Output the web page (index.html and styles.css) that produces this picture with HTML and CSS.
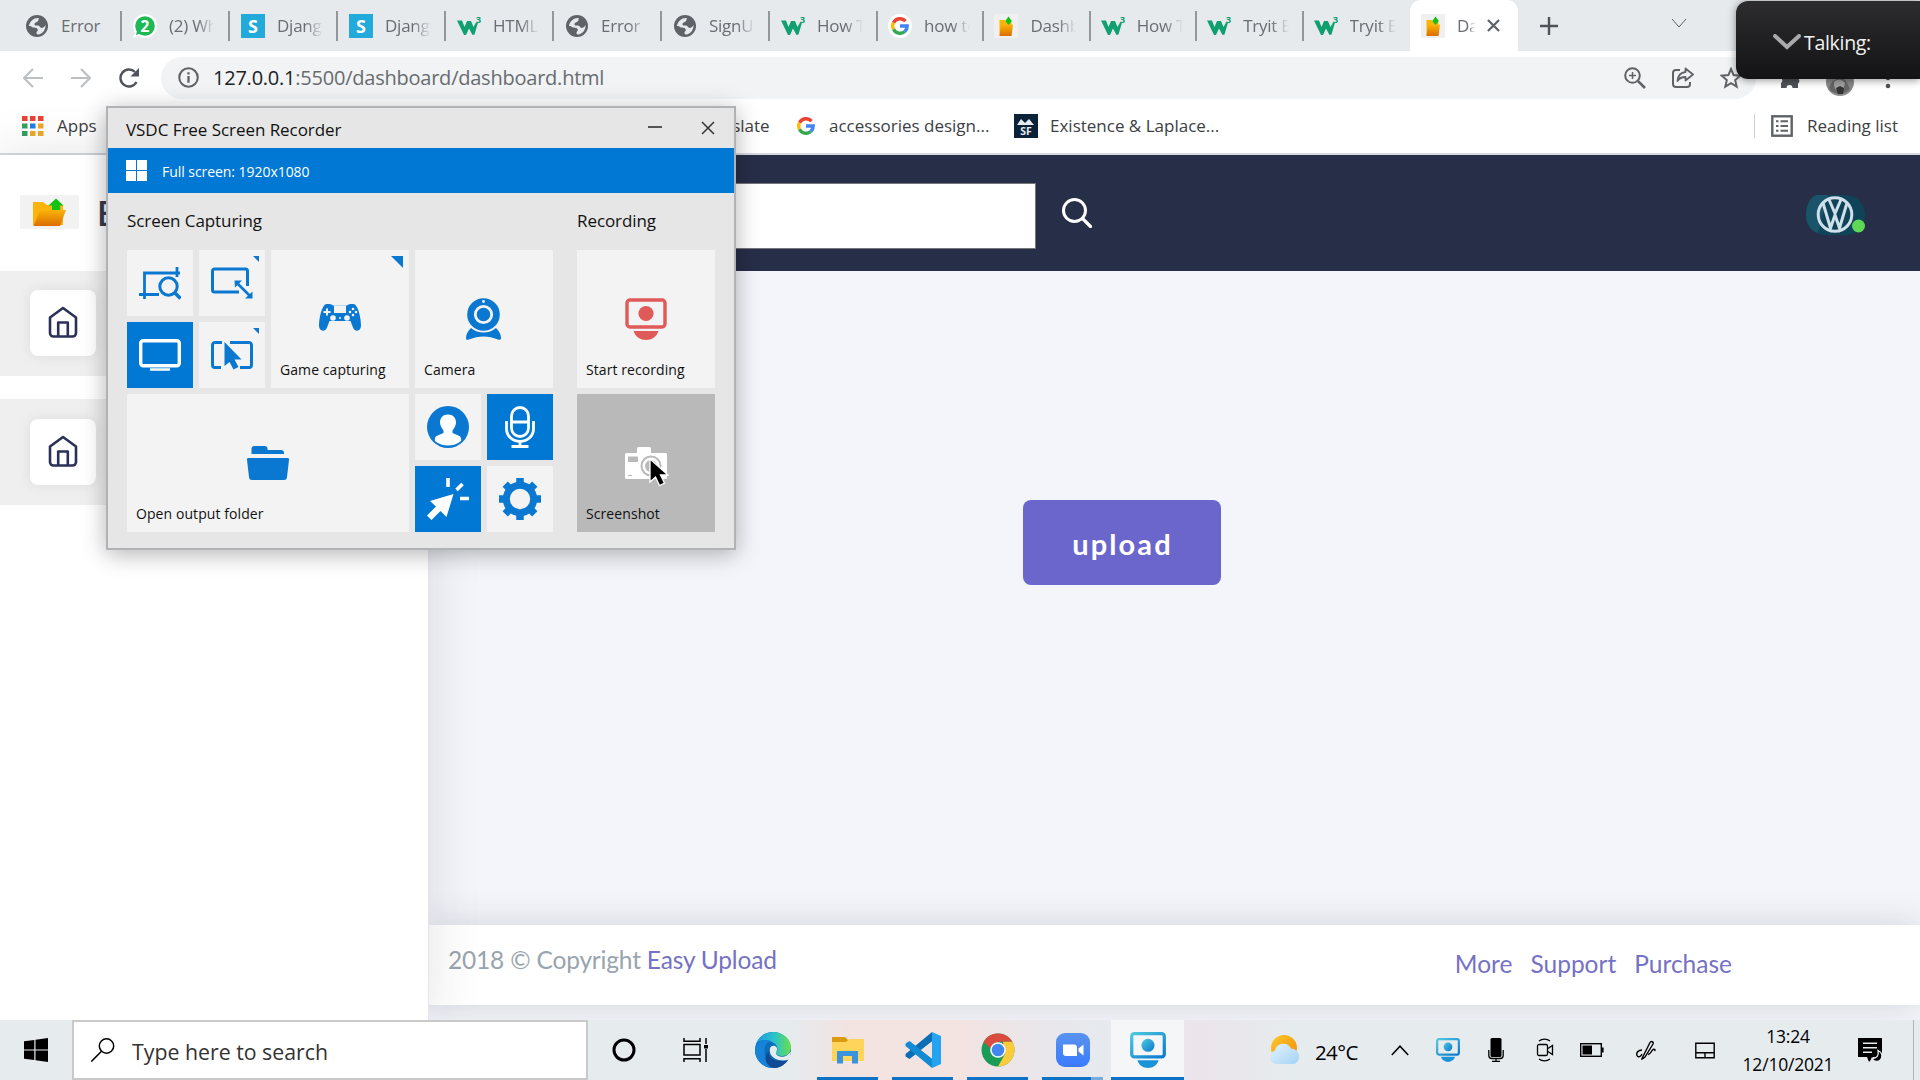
FILE: index.html
```html
<!DOCTYPE html>
<html lang="en">
<head>
<meta charset="utf-8">
<title>Dashboard</title>
<link rel="stylesheet" href="styles.css">
</head>
<body>
<svg class="defs" width="0" height="0">
  <defs>
    <linearGradient id="gFolder" x1="0" y1="0" x2="0" y2="1"><stop offset="0" stop-color="#fbb40a"/><stop offset="1" stop-color="#db6d00"/></linearGradient>
    <linearGradient id="gCyan" x1="0" y1="0" x2="1" y2="1"><stop offset="0" stop-color="#4fc8dd"/><stop offset="1" stop-color="#0b78d0"/></linearGradient>
    <linearGradient id="gEdge" x1="0" y1="0" x2="1" y2="0"><stop offset="0" stop-color="#1b9de2"/><stop offset=".55" stop-color="#2cc3c8"/><stop offset="1" stop-color="#6be04a"/></linearGradient>
    <linearGradient id="gZoom" x1="0" y1="0" x2="0" y2="1"><stop offset="0" stop-color="#5a93ee"/><stop offset="1" stop-color="#3a7bff"/></linearGradient>
    <linearGradient id="gSun" x1="0" y1="0" x2="1" y2="1"><stop offset="0" stop-color="#ffc928"/><stop offset="1" stop-color="#f08a0c"/></linearGradient>
    <linearGradient id="gCloud" x1="0" y1="0" x2="1" y2="1"><stop offset="0" stop-color="#e4f4ff"/><stop offset="1" stop-color="#a4d2f4"/></linearGradient>
  </defs>
  <symbol id="globe" viewBox="0 0 22 22"><circle cx="11" cy="11" r="11" fill="#5f6368"/><path d="M3 10.500C4 6 8 2.500 13 3c-1 1.500 0 2.500-1.500 3.500S8 8 8.500 9.500 10 10.500 12 10.500s2 2.500 3.500 2.500 3-1 4-3c.3 4-2 8-6.500 9.500-1 .3-3-.5-2.500-2s2-1.500 1-3.500-3.500-.5-5.500-2-1.500-1-3-1z" fill="#e6eaed"/></symbol>
  <symbol id="wa" viewBox="0 0 24 24"><circle cx="12" cy="12" r="12" fill="#fff"/><path d="M0 24l3-8 5 5z" fill="#fff"/><circle cx="12" cy="12" r="9.800" fill="#1db954"/><path d="M3 21l1.500-6 4 4z" fill="#1db954"/><text x="12" y="17.500" font-size="15.500" text-anchor="middle" class="glyph">2</text></symbol>
  <symbol id="sdj" viewBox="0 0 24 24"><rect width="24" height="24" fill="#22aadb"/><text x="12" y="18.500" font-size="18" text-anchor="middle" class="glyph">S</text></symbol>
  <symbol id="w3" viewBox="0 0 24 24"><path d="M0 6.500h5l2.500 6.500L10 7h4l2.500 6L19 8.500h2L17.500 20.500l-2 .5-3.500-6.500L9 21H7z" fill="#10a070"/><text x="18.800" y="8.500" font-size="9.500" class="glyph green">3</text></symbol>
  <symbol id="goog" viewBox="0 0 18 18"><g fill="none" stroke-width="3.400"><path d="M14.500 4.200A7.300 7.300 0 0 0 2.500 5.700" stroke="#ea4335"/><path d="M2.500 5.700a7.300 7.300 0 0 0 0 6.600" stroke="#fbbc05"/><path d="M2.500 12.300a7.300 7.300 0 0 0 11.300 2.200" stroke="#34a853"/><path d="M13.800 14.500a7.300 7.300 0 0 0 2.400-5.500H9" stroke="#4285f4"/></g></symbol>
  <symbol id="googtab" viewBox="0 0 24 24"><circle cx="12" cy="12" r="12" fill="#fff"/><use href="#goog" x="3" y="3" width="18" height="18"/></symbol>
  <symbol id="fold" viewBox="0 0 24 24"><rect width="24" height="24" fill="#f0f0f0"/><path d="M5.500 6h5l2 2h5v13h-12z" fill="#fbb40a"/><path d="M7 10.500h12L17.500 22h-12z" fill="url(#gFolder)"/><path d="M14.500 2.500l3.300 4.500-3.300 4-3.200-4z" fill="#12c312"/></symbol>
  <symbol id="home" viewBox="0 0 30 32"><path d="M2 11.500L15 2l13 9.500V27a3.500 3.500 0 0 1-3.500 3.500h-19A3.500 3.500 0 0 1 2 27zM10.200 30V16.500h9.600V30" fill="none" stroke="#2b3059" stroke-width="2.600" stroke-linejoin="round"/></symbol>
  <symbol id="rec" viewBox="0 0 42 42"><rect x="2" y="2" width="38" height="27" rx="3" fill="none" stroke="currentColor" stroke-width="3.400"/><circle cx="21" cy="15.500" r="7.600" fill="currentColor"/><path d="M8.500 33h25c-2 6-7 9-12.500 9S10.500 39 8.500 33z" fill="currentColor"/></symbol>
  <symbol id="recblue" viewBox="0 0 42 42"><rect x="2" y="2" width="38" height="27" rx="3" fill="none" stroke="url(#gCyan)" stroke-width="3.800"/><circle cx="21" cy="15.500" r="7.600" fill="url(#gCyan)"/><path d="M8.500 33h25c-2 6-7 9-12.500 9S10.500 39 8.500 33z" fill="#1a94d6"/></symbol>
</svg>

<header class="browser">
  <div class="tabs">
    <div class="tab"><svg class="fav sm"><use href="#globe"/></svg><span class="ttl">Error</span></div>
    <div class="tab"><svg class="fav"><use href="#wa"/></svg><span class="ttl">(2) WhatsApp</span></div>
    <div class="tab"><svg class="fav"><use href="#sdj"/></svg><span class="ttl">Django</span></div>
    <div class="tab"><svg class="fav"><use href="#sdj"/></svg><span class="ttl">Django</span></div>
    <div class="tab"><svg class="fav"><use href="#w3"/></svg><span class="ttl">HTML</span></div>
    <div class="tab"><svg class="fav sm"><use href="#globe"/></svg><span class="ttl">Error</span></div>
    <div class="tab"><svg class="fav sm"><use href="#globe"/></svg><span class="ttl">SignUp</span></div>
    <div class="tab"><svg class="fav"><use href="#w3"/></svg><span class="ttl">How To</span></div>
    <div class="tab slim"><svg class="fav"><use href="#googtab"/></svg><span class="ttl">how to</span></div>
    <div class="tab slim"><svg class="fav"><use href="#fold"/></svg><span class="ttl">Dashboard</span></div>
    <div class="tab slim"><svg class="fav"><use href="#w3"/></svg><span class="ttl">How To</span></div>
    <div class="tab slim"><svg class="fav"><use href="#w3"/></svg><span class="ttl">Tryit Editor</span></div>
    <div class="tab slim last"><svg class="fav"><use href="#w3"/></svg><span class="ttl">Tryit Editor</span></div>
    <div class="tab active"><svg class="fav"><use href="#fold"/></svg><span class="ttl short">Dashboard</span>
      <svg class="close" viewBox="0 0 14 14"><path d="M1 1l12 12M13 1L1 13" stroke="#5f6368" stroke-width="2.400"/></svg></div>
    <svg class="plus" viewBox="0 0 18 18"><path d="M9 0v18M0 9h18" stroke="#4f5357" stroke-width="2.400"/></svg>
    <svg class="tabmenu" viewBox="0 0 16 10"><path d="M1 1l7 8 7-8" fill="none" stroke="#5f6368" stroke-width="1"/></svg>
  </div>

  <div class="toolbar">
    <svg class="nav back" viewBox="0 0 20 20"><path d="M20 10H2M10 1l-9 9 9 9" fill="none" stroke="#bdc0c3" stroke-width="2.200"/></svg>
    <svg class="nav fwd" viewBox="0 0 20 20"><path d="M0 10h18M10 1l9 9-9 9" fill="none" stroke="#bdc0c3" stroke-width="2.200"/></svg>
    <svg class="nav reload" viewBox="0 0 22 20"><path d="M18.500 14A8.500 8.500 0 1 1 17 4" fill="none" stroke="#505458" stroke-width="2.400"/><path d="M21 0v8.500h-8.500z" fill="#505458"/></svg>
    <div class="omnibox">
      <svg class="info" viewBox="0 0 22 22"><circle cx="11" cy="11" r="9.700" fill="none" stroke="#5f6368" stroke-width="2.200"/><path d="M11 9.500v7M11 5.500v2.400" stroke="#5f6368" stroke-width="2.400"/></svg>
      <span class="url"><b>127.0.0.1</b>:5500/dashboard/dashboard.html</span>
      <svg class="oi" viewBox="0 0 22 22"><circle cx="8.500" cy="8.500" r="7.300" fill="none" stroke="#5f6368" stroke-width="2"/><path d="M13.800 13.800L21 21" stroke="#5f6368" stroke-width="2.600"/><path d="M8.500 5v7M5 8.500h7" stroke="#5f6368" stroke-width="1.500"/></svg>
      <svg class="oi" viewBox="0 0 22 22"><path d="M8 3H4a3 3 0 0 0-3 3v11a3 3 0 0 0 3 3h11a3 3 0 0 0 3-3v-2" fill="none" stroke="#5f6368" stroke-width="2"/><path d="M13.500 1.500l7.500 6-7.500 6v-3.500c-4 0-6.500 1.500-8 4 .5-5 3-8.500 8-9z" fill="none" stroke="#5f6368" stroke-width="1.800" stroke-linejoin="round"/></svg>
      <svg class="oi" viewBox="0 0 22 22"><path d="M11 2l2.600 6.100 6.600.6-5 4.400 1.500 6.500L11 16.200l-5.700 3.400 1.500-6.500-5-4.400 6.600-.6z" fill="none" stroke="#5f6368" stroke-width="2"/></svg>
    </div>
    <svg class="puzzle" viewBox="0 0 22 22"><path d="M2 6h5a3 3 0 0 1 6 0h5v5a3 3 0 0 1 1 5.500V21h-5.500a3 3 0 0 0-6 0H2v-5a3 3 0 0 0 0-5z" fill="#505458"/></svg>
    <svg class="face" viewBox="0 0 28 28"><circle cx="14" cy="14" r="14" fill="#8a8a8a"/><path d="M3 20c3-8 5-7 7-9 5-2 9-1 12 6l2 4a14 14 0 0 1-20 1z" fill="#666"/><path d="M8 14c3-3 8-3 11 1-1 5-3 9-6 8-4-1-5-4-5-9z" fill="#a4a4a4"/><path d="M10 20l4-2 4 2-1 6h-5z" fill="#333"/></svg>
    <svg class="dots" viewBox="0 0 6 22"><circle cx="3" cy="3" r="2.300"/><circle cx="3" cy="11" r="2.300"/><circle cx="3" cy="19" r="2.300"/></svg>
  </div>

  <div class="bookmarks">
    <svg class="apps" viewBox="0 0 22 20"><g fill="#ea4335"><rect width="5.500" height="5"/><rect x="8" width="5.500" height="5"/><rect x="16" width="5.500" height="5"/></g><rect y="7.500" width="5.500" height="5" fill="#34a060"/><rect x="8" y="7.500" width="5.500" height="5" fill="#1a80e0"/><rect x="16" y="7.500" width="5.500" height="5" fill="#eda827"/><rect y="15" width="5.500" height="5" fill="#34a060"/><rect x="8" y="15" width="5.500" height="5" fill="#eda827"/><rect x="16" y="15" width="5.500" height="5" fill="#eda827"/></svg>
    <span class="bm first">Apps</span>
    <span class="bm translate">Translate</span>
    <svg class="g18"><use href="#goog"/></svg>
    <span class="bm acc">accessories design...</span>
    <svg class="sf" viewBox="0 0 24 24"><rect width="24" height="24" fill="#0c2238"/><path d="M3 11l4-6 4 4 4-4 5 6z" fill="#e5ecf2"/><text x="12" y="20.500" font-size="10.500" text-anchor="middle" class="glyph sfx">SF</text></svg>
    <span class="bm ex">Existence &amp; Laplace...</span>
    <div class="reading">
      <svg viewBox="0 0 22 22"><rect x="1.300" y="1.300" width="19.400" height="19.400" fill="none" stroke="#5f6368" stroke-width="2.400"/><path d="M5 6.200h2.500M5 11h2.500M5 15.800h2.500M9.500 6.200H17M9.500 11H17M9.500 15.800H17" stroke="#5f6368" stroke-width="2"/></svg>
      <span class="bm">Reading list</span>
    </div>
  </div>
</header>

<div class="page">
  <aside class="sidebar">
    <div class="brand">
      <svg class="brandimg" viewBox="0 0 59 34"><rect width="59" height="34" fill="#f2f2f2"/><path d="M13 7h10l4 3h16v20H13z" fill="#fbb40a"/><path d="M20 15h26l-6 16H13.500z" fill="url(#gFolder)"/><path d="M36 3.500l7.500 7H40v4.500h-8v-4.500h-3.500z" fill="#12c312"/></svg>
      <span class="brandname">Easy Upload</span>
    </div>
    <div class="item"><div class="ico"><svg><use href="#home"/></svg></div></div>
    <div class="item"><div class="ico"><svg><use href="#home"/></svg></div></div>
  </aside>
  <main class="main">
    <div class="topbar">
      <div class="field"></div>
      <svg class="mag" viewBox="0 0 30 30"><circle cx="12.500" cy="12.500" r="11" fill="none" stroke="#fff" stroke-width="3"/><path d="M20.500 20.500l8 8" stroke="#fff" stroke-width="3.200" stroke-linecap="round"/></svg>
      <svg class="vw" viewBox="0 0 59 40"><rect width="59" height="40" rx="19" fill="#0f4358"/><path d="M10 0h12L12 38C4 36 0 28 0 20S3 3 10 0z" fill="#1a5468"/><g fill="none" stroke="#cfe0ea" stroke-width="3"><circle cx="29" cy="19.500" r="16.800"/><path d="M17 8l7.500 25L29 20l4.500 13L41 8M23 4.500l6 14 6-14"/></g><circle cx="52.500" cy="31" r="6.500" fill="#5fd955"/></svg>
    </div>
    <div class="content"><button class="upload">upload</button></div>
    <footer class="foot">
      <p class="copy">2018 © Copyright <a>Easy Upload</a></p>
      <nav class="links"><a>More</a><a>Support</a><a>Purchase</a></nav>
    </footer>
  </main>
</div>

<div class="taskbar">
  <svg class="start" viewBox="0 0 24 24"><path d="M0 3.300L10.300 2v9.500H0zM11.500 1.800L24 0v11.500H11.500zM0 12.600h10.300V22L0 20.700zM11.500 12.600H24V24l-12.500-1.800z"/></svg>
  <div class="search">
    <svg viewBox="0 0 24 24"><circle cx="16" cy="8" r="7.200" fill="none" stroke="#000" stroke-width="1.500"/><path d="M11 13.300L.8 23.500" stroke="#000" stroke-width="1.600"/></svg>
    <span>Type here to search</span>
  </div>
  <div class="cell sys"><svg width="24" height="24" viewBox="0 0 24 24"><circle cx="12" cy="12" r="10" fill="none" stroke="#000" stroke-width="3"/></svg></div>
  <div class="cell sys"><svg width="26" height="24" viewBox="0 0 26 24"><g fill="none" stroke="#000" stroke-width="1.500"><path d="M1 0v3.200h16V0M1 24v-3.200h16V24"/><rect x="1" y="6.500" width="16" height="10.500"/><path d="M23 0v6M23 11v13"/></g><rect x="21" y="7" width="4" height="3.500"/></svg></div>
  <div class="cell edge"><svg width="36" height="36" viewBox="0 0 36 36"><circle cx="18" cy="18" r="18" fill="#0e6cbd"/><path d="M1 12C4 4 11 0 18 0c10 0 18 7 18 15 0 6-4 9-9 9-4 0-7-2-5-5 1-2 .5-7-5-9C11 7 4 8 1 12z" fill="url(#gEdge)"/><path d="M0 18C0 10 9 6 16 9c-5 1-8 7-6 14s7 11 12 12.500C10 38 0 29 0 18z" fill="#1683d8"/><path d="M14 19c-1 7 6 12 19 9-4 6-10 8.500-15 8-8-3-10-12-4-17z" fill="#114a94"/><path d="M15 16c2-4 8-2 7 2-1 3-2 5 3 6.500 4 1 7-.5 10-4l1-1-1 6.500-2 2C24 30 13 26 15 16z" fill="#e6ebee"/></svg></div>
  <div class="cell run"><svg width="34" height="28" viewBox="0 0 34 28"><path d="M1 1h13l3 3v5H1z" fill="#dc9a10"/><path d="M1 6h14l3-3h15v22H1z" fill="#ffd45a"/><path d="M6 15h21v12.500h-6V20h-9v7.500H6z" fill="#3a94dc"/></svg></div>
  <div class="cell run"><svg width="36" height="36" viewBox="0 0 36 36"><path d="M27 0l9 4v28l-9 4z" fill="#24a4f0"/><path d="M27 0v9.500L4.500 27 .500 24.500V22z" fill="#0b6db8"/><path d="M27 36v-9.500L4.500 9 .500 11.500V14z" fill="#138ad4"/><path d="M27 9.500v17L16 18z" fill="#eee4e2"/></svg></div>
  <div class="cell run"><svg width="34" height="34" viewBox="0 0 34 34"><circle cx="17" cy="17" r="16.500" fill="#1a9c56"/><path d="M2.700 8.700A16.500 16.500 0 0 1 31.300 8.700H17L11 17z" fill="#d94a3f"/><path d="M31.300 8.700A16.500 16.500 0 0 1 17 33.500l7-12.500-2-12.300z" fill="#fccb3c"/><circle cx="17" cy="17" r="7.800" fill="#fff"/><circle cx="17" cy="17" r="6.300" fill="#4286f0"/></svg></div>
  <div class="cell run multi"><svg width="34" height="34" viewBox="0 0 34 34"><rect width="34" height="34" rx="9" fill="url(#gZoom)"/><path d="M7 11.500h11a3 3 0 0 1 3 3V23H10a3 3 0 0 1-3-3zM22.500 15.500l5-4v11l-5-4z" fill="#fff"/></svg></div>
  <div class="cell run on"><svg width="36" height="36"><use href="#recblue"/></svg></div>
  <div class="tray">
    <svg class="weather" viewBox="0 0 33 30"><circle cx="15" cy="13" r="13" fill="url(#gSun)"/><path d="M7 29a7 7 0 0 1-1-13.500 8.500 8.500 0 0 1 16-2A8 8 0 0 1 25 29z" fill="url(#gCloud)"/></svg>
    <span class="temp">24°C</span>
    <svg class="caret" viewBox="0 0 18 11"><path d="M.8 10L9 1.200 17.200 10" fill="none" stroke="#000" stroke-width="1.500"/></svg>
    <svg class="trec"><use href="#recblue"/></svg>
    <svg class="tmic" viewBox="0 0 16 24"><rect x="2.500" width="11" height="19" rx="1.500"/><path d="M.8 12v5.500c0 2 1.500 3 3 3h8.400c1.500 0 3-1 3-3V12M8 20v3.300M4 23.300h8" fill="none" stroke="#000" stroke-width="1.300"/></svg>
    <svg class="tcam" viewBox="0 0 18 24"><g fill="none" stroke="#000" stroke-width="1.300"><rect x="1.500" y="6.500" width="10" height="11" rx="1.500"/><path d="M12 10.500l4.500-3v9l-4.500-3M3 3c3-2.500 8-2.500 11 0M3 21c3 2.500 8 2.500 11 0"/></g></svg>
    <svg class="tbat" viewBox="0 0 24 14"><rect x=".7" y=".7" width="20.600" height="12.600" fill="none" stroke="#000" stroke-width="1.400"/><rect x="2.500" y="2.500" width="9.500" height="9"/><rect x="22" y="4.500" width="1.600" height="5"/></svg>
    <svg class="tpen" viewBox="0 0 20 20"><path d="M6 18.500L14 2.500c1-2 4-.5 3 1.500L9 17l-3.500 2.500zM6 10c-4 0-6 3-5 5.500s4 1 5-1.500M12 14.500c3-.5 3-3 4.500-4.500s3.500-.5 2 1" fill="none" stroke="#000" stroke-width="1.400"/></svg>
    <svg class="tpad" viewBox="0 0 20 16"><path d="M.8.800h18.400v14.400H.8zM.8 10.200h18.400M10 10.200v5" fill="none" stroke="#000" stroke-width="1.400"/></svg>
    <div class="clock"><span>13:24</span><span class="date">12/10/2021</span></div>
    <svg class="note" viewBox="0 0 26 25"><path d="M0 0h24v19h-9l-4 5-2-5H0z"/><path d="M5 5.300h14M5 9.800h14M5 14.300h9" stroke="#e6ebee" stroke-width="1.500"/><path d="M20 12.500c1 5-1 8-6 8 2 4 8 4 9.500-.5 1-3-.5-6-3.500-7.500z" stroke="#e6ebee" stroke-width="1.300"/></svg>
    <div class="peek"></div>
  </div>
</div>

<section class="recorder">
  <div class="rtitle"><span>VSDC Free Screen Recorder</span>
    <svg class="rmin" viewBox="0 0 14 2"><rect width="14" height="2" fill="#555"/></svg>
    <svg class="rx" viewBox="0 0 14 14"><path d="M1 1l12 12M13 1L1 13" stroke="#333" stroke-width="1.500"/></svg>
  </div>
  <div class="rmode"><svg viewBox="0 0 21 21"><path d="M0 0h10v10H0zM11 0h10v10H11zM0 11h10v10H0zM11 11h10v10H11z" fill="#fff"/></svg><span>Full screen: 1920x1080</span></div>
  <div class="rbody">
    <div class="rgroup">
      <h3>Screen Capturing</h3>
      <div class="tiles">
        <div class="tile"><svg width="42" height="33" viewBox="0 0 42 33"><path d="M0 27.500h20M5.500 32V6H41M38 0v10" fill="none" stroke="currentColor" stroke-width="2.800"/><circle cx="29.500" cy="19.500" r="8.700" fill="none" stroke="currentColor" stroke-width="3"/><path d="M36 26l5.500 5.500" stroke="currentColor" stroke-width="3.500"/></svg></div>
        <div class="tile flag"><svg width="42" height="32" viewBox="0 0 42 32"><path d="M28 25H3.500A2 2 0 0 1 1.500 23V4a2 2 0 0 1 2-2h31a2 2 0 0 1 2 2v15" fill="none" stroke="currentColor" stroke-width="3"/><path d="M25 15l14.500 14.500" fill="none" stroke="currentColor" stroke-width="2.600"/><path d="M23.500 13.500h7.500l-7 7zM41.500 31.500H34l7.500-7z" fill="currentColor"/></svg></div>
        <div class="tile big flag game"><svg width="42" height="27" viewBox="0 0 42 27"><path d="M6 .5C9-.3 12 0 14 1.500h14C30 0 33-.3 36 .5c3.500 3 6 14 6 21 0 6-6 7-8 2L31.500 17h-21L8 23.500c-2 5-8 4-8-2C0 14.500 2.500 3.500 6 .5z" fill="currentColor"/><rect x="15" y="1.500" width="12" height="7.500" fill="#f3f3f3"/><g fill="#f3f3f3"><circle cx="14" cy="14" r="2.800"/><circle cx="28" cy="14" r="2.800"/><circle cx="21" cy="14" r="1"/><path d="M4.500 7h2.500V4.500h2V7h2.500v2H9v2.500H7V9H4.500z"/><circle cx="34" cy="5" r="1.300"/><circle cx="34" cy="11" r="1.300"/><circle cx="31" cy="8" r="1.300"/><circle cx="37" cy="8" r="1.300"/></g></svg><span>Game capturing</span></div>
        <div class="tile big cam"><svg width="36" height="42" viewBox="0 0 36 42"><path d="M5 30c7 6 18 6 25 0 3 3 5 6 5 10 0 2-1.500 2-3 1.500-10-4-19-4-29 0C1 42 0 42 0 40c0-4 2-7 5-10z" fill="currentColor"/><circle cx="17.500" cy="16.500" r="17.500" fill="#f3f3f3"/><circle cx="17.500" cy="16.500" r="16.300" fill="currentColor"/><circle cx="17.500" cy="16.500" r="8.200" fill="none" stroke="#f3f3f3" stroke-width="2.800"/><circle cx="17.500" cy="3.500" r="1.400" fill="#f3f3f3"/></svg><span>Camera</span></div>
        <div class="tile hot"><svg width="42" height="32" viewBox="0 0 42 32"><rect x="1.700" y="1.700" width="38.600" height="25" rx="2.500" fill="none" stroke="#fff" stroke-width="3.400"/><path d="M11 30.500h20" stroke="#fff" stroke-width="2.500"/></svg></div>
        <div class="tile flag"><svg width="42" height="30" viewBox="0 0 42 30"><path d="M10 27.500H4a2.500 2.500 0 0 1-2.500-2.500V5A2.500 2.500 0 0 1 4 2.500h7M19 2.500h19A2.500 2.500 0 0 1 40.500 5v20a2.500 2.500 0 0 1-2.500 2.500h-9" fill="none" stroke="currentColor" stroke-width="3"/><path d="M13.500 2v24l5-4 4 7.500 5-2.500-4-7.500h7z" fill="currentColor"/></svg></div>
        <div class="tile wide"><svg width="42" height="34" viewBox="0 0 42 34"><path d="M4.500 8V3a3 3 0 0 1 3-3h10a3 3 0 0 1 3 3v1H34a3 3 0 0 1 3 3v1zM1.500 12h39a1.500 1.500 0 0 1 1.500 2l-2 17a3 3 0 0 1-3 3H5a3 3 0 0 1-3-3L0 14a1.500 1.500 0 0 1 1.500-2z" fill="currentColor"/></svg><span>Open output folder</span></div>
        <div class="tile"><svg width="42" height="42" viewBox="0 0 42 42"><circle cx="21" cy="21" r="21" fill="currentColor"/><path d="M21 8.500c5 0 8 3.500 8 8 0 3-1.500 5-3.500 8v2.500l7 3c1.500 1 2 3 1.500 5a21 21 0 0 1-26 0c-.5-2 0-4 1.500-5l7-3v-2.500c-2-3-3.500-5-3.500-8 0-4.500 3-8 8-8z" fill="#fff"/></svg></div>
        <div class="tile hot"><svg width="30" height="42" viewBox="0 0 30 42"><g fill="none" stroke="#fff" stroke-width="2.800"><rect x="6.500" y="1.500" width="17" height="29" rx="8.500"/><path d="M6.500 16h17M1.500 15v8a13.500 12.500 0 0 0 27 0v-8M15 35.500V40M6.500 40.500h17"/></g></svg></div>
        <div class="tile hot"><svg width="42" height="42" viewBox="0 0 42 42"><path d="M26.500 16L3 23l6 5.500-9 9L4.500 42l9-9 6 6z" fill="#fff"/><path d="M21 0v9M35.500 6l-6 6M33 20.500h9" stroke="#fff" stroke-width="3.600"/></svg></div>
        <div class="tile"><svg width="42" height="42" viewBox="0 0 42 42"><circle cx="21" cy="21" r="13.700" fill="none" stroke="currentColor" stroke-width="7"/><path d="M21 0v6M21 36v6M0 21h6M36 21h6M6.200 6.200l4.200 4.200M31.600 31.600l4.200 4.200M6.200 35.800l4.200-4.200M31.600 10.400l4.200-4.200" stroke="currentColor" stroke-width="7.500"/></svg></div>
      </div>
    </div>
    <div class="rgroup">
      <h3>Recording</h3>
      <div class="tiles solo">
        <div class="tile big red"><svg width="42" height="42"><use href="#rec"/></svg><span>Start recording</span></div>
        <div class="tile big shot"><svg width="42" height="32" viewBox="0 0 42 32"><path d="M1.500 6H12V1.500A1.500 1.500 0 0 1 13.500 0h11A1.500 1.500 0 0 1 26 1.500V6h14.500A1.500 1.500 0 0 1 42 7.500v23a1.500 1.500 0 0 1-1.500 1.500h-39A1.500 1.500 0 0 1 0 30.500v-23A1.500 1.500 0 0 1 1.500 6z" fill="#fff"/><rect x="3" y="9.500" width="10" height="5.500" fill="#b9b9b9"/><path d="M3 28.500h4" stroke="#b9b9b9"/><circle cx="26" cy="19" r="9.500" fill="none" stroke="#b9b9b9" stroke-width="2"/><circle cx="26" cy="19" r="6" fill="#b9b9b9"/></svg><span>Screenshot</span></div>
      </div>
    </div>
  </div>
  <svg class="pointer" viewBox="0 0 20 29"><path d="M1 1v23l5.500-5 4 8.500 5-2.300-4-8.200H19z" fill="#000" stroke="#fff" stroke-width="1.300"/></svg>
</section>

<div class="talking"><svg viewBox="0 0 28 16"><path d="M2 2l12 11L26 2" fill="none" stroke="#a9a9ab" stroke-width="4" stroke-linecap="round"/></svg><span>Talking:</span></div>
</body>
</html>
```
FILE: styles.css
```css
* { box-sizing: border-box; }
body { margin: 0; width: 1920px; height: 1080px; overflow: hidden; display: flex; flex-direction: column; position: relative; background: #f4f5fa; font-family: "Open Sans", "Noto Sans", sans-serif; }
svg { display: block; flex: none; }
.defs { position: absolute; }
span { white-space: nowrap; }
.glyph { font-family: "Open Sans", sans-serif; font-weight: 700; fill: #fff; }
.green { fill: #10a070; }
.sfx { fill: #e5ecf2; }

/* browser frame */
.browser { height: 155px; flex: none; background: #fff; border-bottom: 2px solid #d5d9df; }
.tabs { height: 51px; background: #e6eaed; display: flex; padding-left: 14px; align-items: center; }
.tab { width: 108px; height: 30px; flex: none; display: flex; align-items: center; padding-left: 11px; border-right: 2px solid #94989c; }
.tab.slim { width: 106.400px; padding-left: 10px; }
.tab.last { border-right-color: transparent; }
.fav { width: 24px; height: 24px; margin-right: 12px; }
.fav.sm { width: 22px; height: 22px; margin: 0 13px 0 1px; }
.ttl { width: 47px; overflow: hidden; font-size: 17px; letter-spacing: -.25px; color: #6a6e72; -webkit-mask-image: linear-gradient(90deg, #000 60%, transparent 98%); mask-image: linear-gradient(90deg, #000 60%, transparent 98%); }
.tab:first-child .ttl { -webkit-mask-image: none; mask-image: none; }
.ttl.short { width: 19px; }
.tab.active { height: 51px; background: #fff; border: 0; border-radius: 11px 11px 0 0; padding-left: 11px; }
.close { width: 13px; height: 13px; margin-left: 11px; }
.plus { width: 18px; height: 18px; margin-left: 22px; }
.tabmenu { width: 16px; height: 10px; margin: -6px 0 0 113px; }
.toolbar { height: 53px; display: flex; align-items: center; padding-left: 23px; }
.nav { width: 20px; height: 20px; }
.fwd { margin-left: 28px; }
.reload { width: 22px; margin-left: 27px; }
.omnibox { width: 1595px; height: 42px; margin-left: 21px; border-radius: 21px; background: #f1f3f4; display: flex; align-items: center; padding: 0 14px 0 17px; gap: 26px; }
.info { width: 21px; height: 21px; }
.url { flex: 1; margin-left: -12px; font-size: 20px; letter-spacing: -.23px; color: #686c70; }
.url b { font-weight: 400; color: #202124; }
.oi { width: 22px; height: 22px; }
.puzzle { width: 22px; height: 22px; margin-left: 23px; }
.face { width: 28px; height: 28px; margin: 8px 0 0 25px; }
.dots { width: 6px; height: 22px; margin-left: 31px; fill: #505458; }
.bookmarks { height: 48px; display: flex; align-items: center; padding: 0 22px 5px; }
.apps { width: 22px; height: 20px; margin-right: 13px; }
.bm { font-size: 17px; color: #3c4043; }
.first { width: 42px; }
.translate { margin-left: 597px; width: 73px; text-align: right; }
.g18 { width: 18px; height: 18px; margin-left: 28px; }
.acc { margin-left: 14px; width: 160px; }
.sf { width: 24px; height: 24px; margin-left: 25px; }
.ex { margin-left: 12px; }
.reading { margin-left: auto; display: flex; align-items: center; gap: 14px; height: 24px; border-left: 1px solid #cfd2d6; padding-left: 16px; }
.reading svg { width: 22px; height: 22px; }

/* web page */
.page { height: 865px; flex: none; display: flex; }
.sidebar { width: 429px; flex: none; background: #fff; border-right: 1px solid #e4e5ea; box-shadow: 0 0 50px rgba(40, 42, 60, .13); z-index: 1; }
.brand { height: 116px; display: flex; align-items: center; padding: 0 0 2px 20px; }
.brandimg { width: 59px; height: 34px; }
.brandname { margin-left: 18px; font: 600 34px "Lato", sans-serif; color: #383a4c; }
.item { height: 105px; padding: 19px 30px; background: #efefef; }
.item + .item { height: 106px; margin-top: 23px; padding-top: 20px; }
.ico { width: 66px; height: 66px; border-radius: 8px; background: #fff; box-shadow: 0 0 14px rgba(0, 0, 0, .08); display: flex; align-items: center; justify-content: center; padding-bottom: 2px; }
.ico svg { width: 30px; height: 32px; }
.main { flex: 1; display: flex; flex-direction: column; background: #f4f5fa; }
.topbar { height: 116px; flex: none; background: #272e48; display: flex; align-items: center; padding: 0 55px 0 171px; }
.field { width: 436px; height: 66px; margin-bottom: -6px; background: #fff; border: 1px solid #777; }
.mag { width: 30px; height: 30px; margin-left: 26px; }
.vw { width: 59px; height: 40px; margin: 4px 0 0 auto; }
.content { flex: 1; padding: 229px 0 0 594px; }
.upload { width: 198px; height: 85px; border: 0; border-radius: 8px; background: #6a66cc; color: #fff; font: 700 29px "Lato", sans-serif; letter-spacing: 2.100px; padding: 1px 0 0 1px; display: block; }
.foot { height: 80px; margin-bottom: 15px; background: #fff; box-shadow: 0 0 36px rgba(40, 42, 60, .16); display: flex; justify-content: space-between; padding: 0 188px 0 19px; font: 400 24.500px/30px "Lato", sans-serif; color: #98a4ae; }
.foot a { color: #7571c4; }
.copy { margin: 20px 0 0; letter-spacing: -.18px; white-space: nowrap; }
.links { margin-top: 24px; display: flex; gap: 18px; }

/* taskbar */
.taskbar { height: 60px; flex: none; display: flex; position: relative; z-index: 2; background: linear-gradient(90deg, #e6ebee 0, #e6ebee 790px, #f3e3e1 850px, #f3e3e1 960px, #eae6ea 1030px, #e6eaee 1100px, #ebe5ea 1200px, #e6ebee 1290px); }
.start { width: 24px; height: 24px; margin: 18px 24px; }
.search { width: 516px; border: 2px solid #c9c9c9; background: #fff; display: flex; align-items: center; padding-left: 16px; gap: 17px; font-size: 21.300px; color: #333; }
.search span { margin-top: 2px; }
.search svg { width: 25px; height: 24px; }
.cell { width: 75px; display: flex; align-items: center; justify-content: center; position: relative; }
.cell.sys { width: 72px; }
.edge { margin-left: 3px; }
.run { border-bottom: 3px solid #0b72c8; padding-top: 3px; width: 61px; margin: 0 7px; }
.run.on { width: 73px; margin: 0 1px; background: #f5f6f8; }
.multi { border-image: linear-gradient(90deg, #0b72c8 80%, #78acdc 80%) 1; border-top: 0; }
.tray { flex: 1; display: flex; align-items: center; margin-left: 84px; }
.weather { width: 33px; height: 30px; }
.temp { width: 44px; margin: 3px 0 0 13px; font-size: 20.500px; letter-spacing: -.6px; }
.caret { width: 18px; height: 11px; margin-left: 32px; }
.trec { width: 24px; height: 24px; margin-left: 27px; }
.tmic { width: 16px; height: 24px; margin-left: 28px; }
.tcam { width: 18px; height: 24px; margin-left: 32px; }
.tbat { width: 24px; height: 14px; margin-left: 26px; }
.tpen { width: 20px; height: 22px; margin-left: 32px; }
.tpad { width: 20px; height: 17px; margin-left: 39px; }
.clock { width: 94px; margin-left: 26px; display: flex; flex-direction: column; align-items: center; font-size: 17.500px; line-height: 28px; letter-spacing: -.2px; }
.note { width: 26px; height: 25px; margin-left: 23px; }
.peek { width: 1px; height: 60px; margin-left: 29px; background: #aeb3b7; }

/* recorder window, floating over the page */
.recorder { position: absolute; left: 106px; top: 106px; width: 630px; height: 444px; border: 2px solid #b0b2b6; background: #e6e6e6; box-shadow: 0 4px 22px rgba(0, 0, 0, .3); color: #111; z-index: 5; }
.rtitle { height: 40px; display: flex; align-items: center; padding: 2px 19px 0 18px; font-size: 17px; letter-spacing: -.05px; }
.rtitle span { flex: 1; }
.rmin { width: 14px; height: 2px; margin: -4px 39px 0 0; }
.rx { width: 14px; height: 14px; margin-top: -3px; }
.rmode { height: 45px; background: #0178d4; color: #fff; display: flex; align-items: center; padding: 0 18px; gap: 15px; font-size: 14px; letter-spacing: -.05px; }
.rmode span { margin-top: 2px; }
.rmode svg { width: 21px; height: 21px; }
.rbody { display: flex; gap: 24px; padding: 0 19px; }
.rgroup h3 { margin: 0; height: 57px; line-height: 55px; font-size: 17px; letter-spacing: -.08px; font-weight: 400; white-space: nowrap; }
.tiles { display: grid; grid-template-columns: 66px 66px 138px 66px 66px; grid-auto-rows: 66px; gap: 6px; }
.tiles.solo { grid-template-columns: 138px; }
.tile { background: #f3f3f3; color: #0a78d1; display: flex; align-items: center; justify-content: center; position: relative; }
.tile.big { grid-row: span 2; }
.tile.game { padding-bottom: 3px; }
.tile.cam { grid-column: span 2; }
.tile.wide { grid-column: span 3; grid-row: span 2; }
.tile.hot { background: #0178d4; }
.tile.red { color: #e05a5a; }
.tile.shot { background: #b9b9b9; }
.tile span { position: absolute; left: 9px; bottom: 8px; font-size: 14px; letter-spacing: .08px; line-height: 20px; color: #111; }
.tile.flag::after { content: ""; position: absolute; right: 6px; top: 6px; border-top: 6px solid #0a78d1; border-left: 6px solid transparent; }
.tile.game::after { border-width: 12px 0 0 12px; }
.pointer { position: absolute; left: 541px; top: 350px; width: 20px; height: 29px; }

/* meeting overlay */
.talking { position: absolute; right: 0; top: 1px; width: 184px; height: 78px; border-radius: 12px 0 0 12px; background: linear-gradient(#2d2d30, #131315); box-shadow: 0 1px 8px rgba(0, 0, 0, .45); display: flex; align-items: center; padding: 4px 0 0 37px; gap: 3px; color: #f2f2f2; font-size: 19.500px; letter-spacing: -.3px; z-index: 6; }
.talking svg { width: 28px; height: 16px; }
```
